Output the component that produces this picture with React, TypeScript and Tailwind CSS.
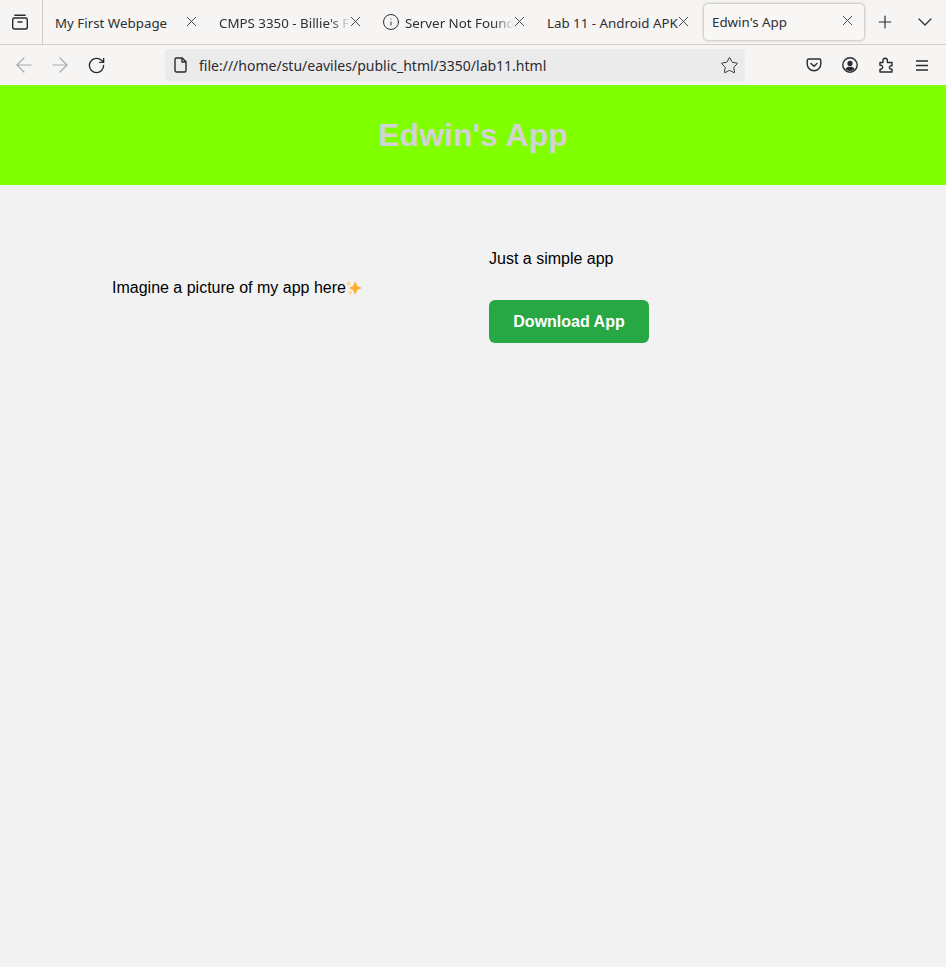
import { X, Plus, ChevronDown, ArrowLeft, ArrowRight, RotateCw, Info, Star } from 'lucide-react';

const tabs = [
  { title: 'My First Webpage', fade: false },
  { title: "CMPS 3350 - Billie's F", fade: true },
  { title: 'Server Not Found', fade: true, info: true },
  { title: 'Lab 11 - Android APK', fade: false },
];

function TabRow({ title, fade, info }: { title: string; fade: boolean; info?: boolean }) {
  return (
    <div className="flex items-center w-[164px] h-full pl-2 pr-[11px] shrink-0">
      {info && <Info className="w-[18px] h-[18px] -ml-[1px] mr-[5px] shrink-0 text-[#2b2a33]" strokeWidth={1.3} />}
      <span
        className={`flex-1 min-w-0 pt-[3px] whitespace-nowrap text-[13.33px] text-[#2e2e33] ${fade ? 'overflow-hidden [mask-image:linear-gradient(to_left,transparent,black_20px)]' : ''}`}
      >
        {title}
      </span>
      <X className="w-[17px] h-[17px] shrink-0 -ml-[3px] mb-[2px] text-[#3a3a40]" strokeWidth={1.3} />
    </div>
  );
}

function ToolbarIcon({ children }: { children: React.ReactNode }) {
  return <div className="flex items-center justify-center w-9 h-9 shrink-0">{children}</div>;
}

export default function App() {
  return (
    <div className="min-h-[967px] flex flex-col bg-[#f2f2f2] font-['Liberation_Sans',Arial,sans-serif]">
      <div className="font-['Noto_Sans',sans-serif] bg-[#f6f5f3]">
        {/* tab strip */}
        <div className="flex items-center h-[45px] border-b border-[#d4cfca]">
          <div className="flex items-center justify-center w-[43px] h-full pr-[3px] border-r border-[#cfcac5] shrink-0">
            <svg width="16" height="16" viewBox="0 0 16 16" fill="none" stroke="#2b2a33" strokeWidth="1.4" className="mb-[1px]">
              <rect x="0.7" y="4" width="14.6" height="11" rx="1.8" />
              <path d="M2.8 1.2h10.4" strokeLinecap="round" />
              <path d="M6 8h4" strokeLinecap="round" />
            </svg>
          </div>
          <div className="w-1 shrink-0" />
          {tabs.map((t) => (
            <TabRow key={t.title} title={t.title} fade={t.fade} info={t.info} />
          ))}
          <div className="flex items-center w-[160px] h-[36px] ml-[1px] pl-2 pr-[8px] mb-[1px] shrink-0 rounded-[4px] bg-[#f8f7f5] shadow-[0_0_3px_rgba(0,0,0,0.4)]">
            <span className="flex-1 pt-[3px] text-[13.33px] text-[#2e2e33] whitespace-nowrap">Edwin's App</span>
            <X className="w-[17px] h-[17px] mb-[2px] text-[#3a3a40]" strokeWidth={1.3} />
          </div>
          <div className="flex items-center justify-center w-10 ml-[1px]">
            <Plus className="w-5 h-5 text-[#2b2a33]" strokeWidth={1.4} />
          </div>
          <ChevronDown className="w-6 h-6 ml-[8px] text-[#2b2a33]" strokeWidth={1.2} />
        </div>

        {/* toolbar */}
        <div className="flex items-center h-[40px]">
          <div className="flex items-center pl-[6px]">
            <ToolbarIcon><ArrowLeft className="w-6 h-6 text-[#a9a9ab]" strokeWidth={1.2} /></ToolbarIcon>
            <ToolbarIcon><ArrowRight className="w-6 h-6 text-[#a9a9ab]" strokeWidth={1.2} /></ToolbarIcon>
            <ToolbarIcon><RotateCw className="w-[19px] h-[19px] text-[#2b2a33]" strokeWidth={1.7} /></ToolbarIcon>
          </div>
          <div className="flex items-center w-[580px] h-8 ml-[51px] pl-[9px] pr-[6px] rounded-[4px] bg-[#ebebeb]">
            <svg width="14" height="16" viewBox="0 0 14 16" fill="none" stroke="#2b2a33" strokeWidth="1.4" strokeLinejoin="round" className="shrink-0">
              <path d="M2.5 1h5.7L12 4.8V13.500a1.500 1.500 0 0 1-1.500 1.500h-8A1.500 1.500 0 0 1 1 13.500V2.500A1.500 1.500 0 0 1 2.500 1z" />
              <path d="M8 1v4h4" />
            </svg>
            <span className="flex-1 ml-[11px] text-[14px] text-[#2b2a33] whitespace-nowrap">file:///home/stu/eaviles/public_html/3350/lab11.html</span>
            <Star className="w-[19px] h-[19px] text-[#2b2a33]" strokeWidth={1.2} />
          </div>
          <div className="flex items-center ml-[51px]">
            <ToolbarIcon>
              <svg width="16" height="16" viewBox="0 0 16 16" fill="none" stroke="#2b2a33" strokeWidth="1.4" strokeLinecap="round" strokeLinejoin="round">
                <path d="M2.600 2h10.800a1.400 1.400 0 0 1 1.400 1.400V7a6.800 6.800 0 0 1-13.600 0V3.400A1.400 1.400 0 0 1 2.600 2z" />
                <path d="M5 6.500 8 9.300l3-2.800" />
              </svg>
            </ToolbarIcon>
            <ToolbarIcon>
              <svg width="16" height="16" viewBox="0 0 16 16">
                <circle cx="8" cy="8" r="7.200" fill="none" stroke="#2b2a33" strokeWidth="1.4" />
                <circle cx="8" cy="6.400" r="2.600" fill="#2b2a33" />
                <path d="M3.400 12.200C4.200 10.400 6 9.800 8 9.800s3.800.6 4.600 2.400A6 6 0 0 1 8 14a6 6 0 0 1-4.600-1.800z" fill="#2b2a33" />
              </svg>
            </ToolbarIcon>
            <ToolbarIcon>
              <svg width="14" height="16" viewBox="0 0 14 16" fill="none" stroke="#2b2a33" strokeWidth="1.4" strokeLinejoin="round">
                <path d="M1 5.500h3V3.500a2.200 2.200 0 0 1 4.400 0v2h4.600v3.300h-1.400a1.800 1.800 0 0 0 0 3.400H13V15H1v-2.800h1.300a2 2 0 0 0 0-3.800H1z" />
              </svg>
            </ToolbarIcon>
            <ToolbarIcon>
              <svg width="12" height="11" viewBox="0 0 12 11" fill="none" stroke="#2b2a33" strokeWidth="1.3">
                <path d="M0 1h12M0 5.500h12M0 10h12" />
              </svg>
            </ToolbarIcon>
          </div>
        </div>
      </div>

      {/* page */}
      <header className="flex items-center justify-center h-[100px] bg-[#7fff00]">
        <h1 className="text-[32px] font-bold text-[#d3d3d3]">Edwin's App</h1>
      </header>

      <main className="flex items-start pl-[112px] pt-[65px]">
        <div className="flex items-center w-[377px] pt-[29px] text-base leading-[18px] text-black">
          Imagine a picture of my app here
          <svg width="16" height="16" viewBox="0 0 16 16" className="shrink-0 -mt-[1px]">
            <path d="M9.200 1 11.300 5.900 15.800 8 11.300 10.100 9.200 15 7.100 10.100 2.600 8 7.100 5.900z" fill="#ffac33" />
            <path d="M2.400 0.800 3.300 2.700 5 3.500 3.300 4.300 2.400 6.200 1.500 4.300 0 3.500 1.500 2.700zM4.200 10 5 11.700 6.600 12.500 5 13.300 4.200 15 3.400 13.300 1.800 12.500 3.400 11.700z" fill="#ffcc80" />
          </svg>
        </div>
        <div className="flex flex-col items-start">
          <p className="text-base leading-[18px] text-black">Just a simple app</p>
          <button className="mt-[32px] w-[160px] h-[43px] rounded-[6px] bg-[#28a745] text-base font-bold text-white">
            Download App
          </button>
        </div>
      </main>
    </div>
  );
}
